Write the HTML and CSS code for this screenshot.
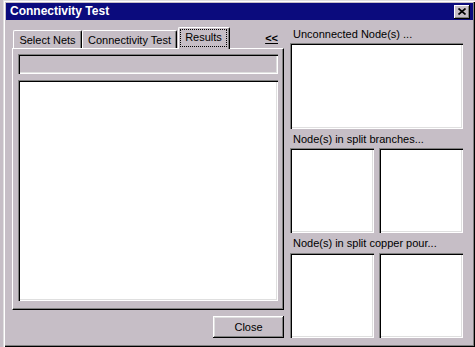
FILE: index.html
```html
<!DOCTYPE html>
<html>
<head>
<meta charset="utf-8">
<link rel="stylesheet" href="styles.css">
</head>
<body>
<div class="frame">
  <div class="titlebar">
    <span class="title">Connectivity Test</span>
    <div class="closebtn">
      <svg width="8" height="7" viewBox="0 0 8 7"><path d="M0.5 0.5L7.5 6.5M7.5 0.5L0.5 6.5" stroke="#000" stroke-width="1.7" fill="none"/></svg>
    </div>
  </div>
  <div class="client">
    <div class="left">
      <div class="tabrow">
        <div class="tab t1">Select Nets</div>
        <div class="tab t2">Connectivity Test</div>
        <div class="tab t3 sel"><span class="focus">Results</span></div>
        <div class="collapse">&lt;&lt;</div>
      </div>
      <div class="panel">
        <div class="field"></div>
        <div class="listbox big"></div>
      </div>
      <div class="btnrow">
        <div class="button">Close</div>
      </div>
    </div>
    <div class="right">
      <div class="label">Unconnected Node(s) ...</div>
      <div class="listbox unc"></div>
      <div class="label l2">Node(s) in split branches...</div>
      <div class="pair">
        <div class="listbox half"></div>
        <div class="listbox half"></div>
      </div>
      <div class="label l3">Node(s) in split copper pour...</div>
      <div class="pair">
        <div class="listbox half"></div>
        <div class="listbox half"></div>
      </div>
    </div>
  </div>
</div>
</body>
</html>
```

FILE: styles.css
```css
html, body {
  margin: 0;
  padding: 0;
}
body {
  width: 475px;
  height: 347px;
  overflow: hidden;
  background: #c6bec6;
  font-family: "Liberation Sans", Arial, sans-serif;
  font-size: 11px;
  color: #000;
}
.frame {
  margin-left: 3px;
  width: 472px;
  height: 347px;
  box-sizing: border-box;
  padding: 3px 2px 0 3px;
  display: flex;
  flex-direction: column;
  box-shadow: inset 1px 1px #dfdfdf, inset 2px 2px #fff, inset -1px -1px #000, inset -2px -2px #808080;
}
.titlebar {
  height: 17px;
  background: #0b0b7d;
  color: #fff;
  display: flex;
  align-items: center;
  justify-content: space-between;
  padding: 0 3px 0 4px;
}
.title {
  font-weight: bold;
  font-size: 12px;
  line-height: 17px;
}
.closebtn {
  width: 16px;
  height: 14px;
  background: #c6bec6;
  box-shadow: inset -1px -1px #000, inset 1px 1px #fff, inset -2px -2px #808080;
  display: flex;
  align-items: center;
  justify-content: center;
}
.client {
  display: flex;
  padding-left: 6px;
}
.left {
  width: 272px;
  display: flex;
  flex-direction: column;
  padding-top: 7px;
}
.tabrow {
  display: flex;
  align-items: flex-end;
  height: 21px;
  padding-left: 1px;
  position: relative;
  z-index: 1;
}
.tab {
  height: 18px;
  box-sizing: border-box;
  border-top: 1px solid #fff;
  border-left: 1px solid #fff;
  border-right: 1px solid #000;
  border-radius: 2px 2px 0 0;
  box-shadow: inset -1px 0 #808080;
  padding-top: 3px;
  line-height: 13px;
  text-align: center;
  white-space: nowrap;
}
.t1 { width: 69px; }
.t2 { width: 95px; }
.t3 { width: 52px; margin-left: 1px; }
.tab.sel {
  height: 22px;
  margin-bottom: -1px;
  background: #c6bec6;
  padding: 1px 2px 0 1px;
}
.focus {
  display: block;
  border: 1px dotted #000;
  height: 16px;
  line-height: 14px;
}
.collapse {
  margin-left: auto;
  margin-right: 6px;
  align-self: center;
  font-weight: bold;
  text-decoration: underline;
  line-height: 13px;
  padding-top: 2px;
}
.panel {
  height: 262px;
  box-sizing: border-box;
  border-top: 1px solid #fff;
  border-left: 1px solid #fff;
  border-right: 1px solid #000;
  border-bottom: 1px solid #000;
  box-shadow: inset -1px -1px #808080;
  padding: 5px;
  display: flex;
  flex-direction: column;
}
.field {
  height: 20px;
  box-shadow: inset 1px 1px #808080, inset 2px 2px #000, inset -1px -1px #fff, inset -2px -2px #dfdfdf;
}
.listbox {
  background: #fff;
  box-shadow: inset 1px 1px #808080, inset 2px 2px #000, inset -1px -1px #fff, inset -2px -2px #dfdfdf;
}
.big {
  margin-top: 6px;
  height: 221px;
}
.btnrow {
  display: flex;
  justify-content: flex-end;
  margin-top: 6px;
}
.button {
  width: 71px;
  height: 22px;
  box-sizing: border-box;
  box-shadow: inset -1px -1px #000, inset 1px 1px #fff, inset -2px -2px #808080, inset 2px 2px #dfdfdf;
  text-align: center;
  line-height: 22px;
}
.right {
  margin-left: 6px;
  width: 173px;
  padding-top: 8px;
  display: flex;
  flex-direction: column;
}
.label {
  line-height: 13px;
  padding-left: 3px;
  margin-bottom: 2px;
  white-space: nowrap;
}
.l2 { margin-top: 4px; }
.l3 { margin-top: 4px; margin-bottom: 3px; }
.unc { height: 86px; }
.pair {
  display: flex;
  justify-content: space-between;
}
.half {
  width: 84px;
  height: 85px;
}
```
